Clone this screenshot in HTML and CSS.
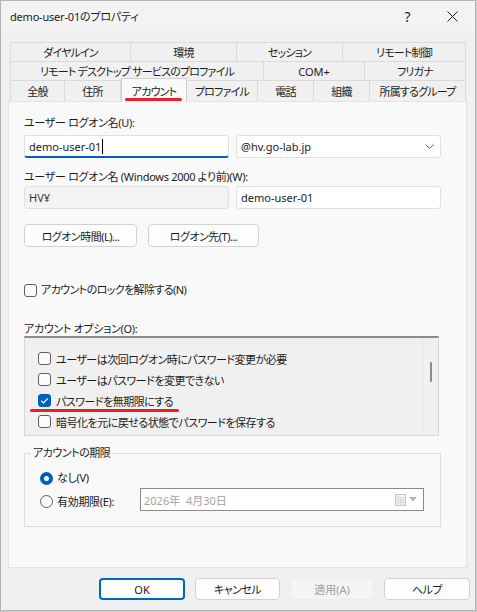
FILE: index.html
```html
<!DOCTYPE html>
<html lang="ja">

<head>
  <meta charset="UTF-8">
  <meta name="viewport" content="width=device-width, initial-scale=1.0">
  <title>demo-user-01のプロパティ</title>
  <link rel="stylesheet" href="styles.css">
</head>

<body>
  <div class="dialog">
    <div class="titlebar">
      <span class="title">demo-user-01のプロパティ</span>
      <span class="caption-btn">?</span>
      <span class="caption-btn">
        <svg width="11" height="11" viewBox="0 0 11 11"><path d="M0.5 0.5l10 10M10.5 0.5l-10 10" stroke="#1b1b1b" stroke-width="1"/></svg>
      </span>
    </div>

    <!-- three rows of tabs, the active one sits on the bottom row -->
    <div class="tabs">
      <div class="tab-row">
        <div class="tab w121">ダイヤルイン</div>
        <div class="tab w106">環境</div>
        <div class="tab w106">セッション</div>
        <div class="tab w123">リモート制御</div>
      </div>
      <div class="tab-row">
        <div class="tab w254">リモート デスクトップ サービスのプロファイル</div>
        <div class="tab w101 latin">COM+</div>
        <div class="tab w101">フリガナ</div>
      </div>
      <div class="tab-row last">
        <div class="tab w55">全般</div>
        <div class="tab w56">住所</div>
        <div class="tab w66 active">アカウント</div>
        <div class="tab w71">プロファイル</div>
        <div class="tab w56">電話</div>
        <div class="tab w56">組織</div>
        <div class="tab w96">所属するグループ</div>
      </div>
    </div>

    <div class="panel">
      <div class="field-label first">ユーザー ログオン名(U):</div>
      <div class="field-row">
        <div class="textbox focused">demo-user-01<span class="caret"></span></div>
        <div class="textbox combo">
          <span>@hv.go-lab.jp</span>
          <svg width="9" height="5" viewBox="0 0 9 5"><path d="M0.5 0.5l4 4 4-4" fill="none" stroke="#606060" stroke-width="1"/></svg>
        </div>
      </div>

      <div class="field-label second">ユーザー ログオン名 (Windows 2000 より前)(W):</div>
      <div class="field-row tight">
        <div class="textbox readonly">HV¥</div>
        <div class="textbox">demo-user-01</div>
      </div>

      <div class="button-row">
        <button class="btn jp logon-hours">ログオン時間(L)...</button>
        <button class="btn jp logon-to">ログオン先(T)...</button>
      </div>

      <label class="check unlock"><span class="box"></span>アカウントのロックを解除する(N)</label>

      <div class="field-label options">アカウント オプション(O):</div>
      <div class="listbox">
        <div class="list-items">
          <div class="list-item"><span class="box"></span>ユーザーは次回ログオン時にパスワード変更が必要</div>
          <div class="list-item"><span class="box"></span>ユーザーはパスワードを変更できない</div>
          <div class="list-item marked">
            <span class="box checked">
              <svg width="13" height="13" viewBox="0 0 13 13"><path d="M3.3 6.8l2.2 2.1 4.3-4.6" fill="none" stroke="#fff" stroke-width="1.2"/></svg>
            </span>パスワードを無期限にする
          </div>
          <div class="list-item"><span class="box"></span>暗号化を元に戻せる状態でパスワードを保存する</div>
        </div>
        <div class="scrollbar"><span class="thumb"></span></div>
      </div>

      <div class="groupbox">
        <span class="group-title">アカウントの期限</span>
        <label class="radio-row first"><span class="radio on"></span>なし(V)</label>
        <div class="expire-row">
          <label class="radio-row expire"><span class="radio"></span>有効期限(E):</label>
          <div class="datepicker">
            <span>2026年&nbsp;&nbsp;4月30日</span>
            <span class="date-icons">
              <svg width="11" height="12" viewBox="0 0 11 12">
                <rect x="0.5" y="0.5" width="10" height="11" fill="#f4f4f4" stroke="#c4c4c4"/>
                <path d="M0.5 3.5h10M0.5 6h10M0.5 8.5h10M3 3.5v8M5.5 3.5v8M8 3.5v8" stroke="#d6d6d6" stroke-width="0.8"/>
              </svg>
              <svg width="8" height="5" viewBox="0 0 8 5"><path d="M0 0h8L4 4.5z" fill="#b4b4b4"/></svg>
            </span>
          </div>
        </div>
      </div>
    </div>

    <div class="footer">
      <button class="btn default w86">OK</button>
      <button class="btn jp w85">キャンセル</button>
      <button class="btn disabled w84">適用(A)</button>
      <button class="btn jp w86">ヘルプ</button>
    </div>
  </div>
</body>

</html>
```

FILE: styles.css
```css
* {
  box-sizing: border-box;
}
body {
  margin: 0;
  background-color: #cdcdcd;
  font-family: "Noto Sans", "Noto Sans CJK JP", sans-serif;
  font-size: 11px;
  color: #1b1b1b;
  font-feature-settings: "palt";
}
.dialog {
  width: 476px;
  height: 611px;
  background-color: #f0f0f0;
  border: 1px solid #b4b4b4;
  display: flex;
  flex-direction: column;
}
.titlebar {
  height: 30px;
  display: flex;
  align-items: center;
  padding-left: 9px;
  background-color: #f3f3f3;
  letter-spacing: -0.2px;
}
.title {
  flex: 1;
}
.caption-btn {
  width: 45px;
  height: 30px;
  display: flex;
  align-items: center;
  justify-content: center;
  font-size: 14px;
}

/* tabs */
.tabs {
  margin: 11px 0 0 9px;
  width: 456px;
}
.tab-row {
  display: flex;
  height: 19px;
}
.tab-row.last {
  height: 21px;
}
.tab {
  display: flex;
  align-items: center;
  justify-content: center;
  border-top: 1px solid #dadada;
  border-right: 1px solid #dadada;
  background-color: #f0f0f0;
  white-space: nowrap;
  letter-spacing: -0.8px;
}
.tab.latin {
  letter-spacing: 0;
}
.tab:first-child {
  border-left: 1px solid #dadada;
}
.tab.active {
  position: relative;
  z-index: 1;
  margin-top: -2px;
  height: 24px;
  background-color: #f9f9f9;
  border-left: 1px solid #d0d0d0;
  border-right: 1px solid #d0d0d0;
  border-top: 1px solid #d0d0d0;
}
.tab.active::after {
  content: "";
  position: absolute;
  left: 3px;
  width: 57px;
  bottom: 1px;
  height: 3px;
  border-radius: 2px;
  background-color: #e8202a;
}
.w55 { width: 55px; }
.w56 { width: 56px; }
.w66 { width: 66px; }
.w71 { width: 71px; }
.w84 { width: 84px; }
.w85 { width: 85px; }
.w86 { width: 86px; }
.w96 { width: 96px; }
.w101 { width: 101px; }
.w106 { width: 106px; }
.w121 { width: 121px; }
.w123 { width: 123px; }
.w254 { width: 254px; }

/* tab page */
.panel {
  margin-left: 7px;
  width: 459px;
  height: 467px;
  background-color: #f9f9f9;
  border: 1px solid #e3e3e3;
  padding: 0 0 0 15px;
  display: flex;
  flex-direction: column;
  align-items: flex-start;
}
.field-label {
  line-height: 16px;
  letter-spacing: -0.3px;
}
.field-label.first {
  margin-top: 13px;
}
.field-label.second {
  margin-top: 11px;
}
.field-label.options {
  margin-top: 24px;
  line-height: 14px;
}
.field-row {
  display: flex;
  gap: 7px;
  margin-top: 4px;
}
.field-row.tight {
  margin-top: 1px;
}
.textbox {
  width: 205px;
  height: 23px;
  display: flex;
  align-items: center;
  padding: 0 4px;
  background-color: #fff;
  border: 1px solid #e0e0e0;
  border-radius: 3px;
  white-space: nowrap;
}
.textbox.focused {
  border-bottom: 2px solid #005fb8;
  padding-top: 1px;
}
.caret {
  display: inline-block;
  width: 1px;
  height: 15px;
  margin-left: 1px;
  background-color: #000;
}
.textbox.combo {
  justify-content: space-between;
  padding-right: 6px;
}
.textbox.readonly {
  background-color: #f3f3f3;
  color: #333;
}
.button-row {
  display: flex;
  gap: 11px;
  margin-top: 15px;
}
.btn {
  height: 23px;
  padding: 0;
  font-family: inherit;
  font-size: 11px;
  font-feature-settings: "palt";
  color: #1b1b1b;
  background-color: #fdfdfd;
  border: 1px solid #d2d2d2;
  border-radius: 4px;
}
.btn.jp {
  letter-spacing: -0.5px;
}
.logon-hours {
  width: 113px;
}
.logon-to {
  width: 111px;
}

/* checkboxes */
.check {
  display: flex;
  align-items: center;
  gap: 4px;
  line-height: 16px;
  letter-spacing: -0.6px;
}
.check.unlock {
  margin-top: 35px;
}
.box {
  width: 13px;
  height: 13px;
  flex-shrink: 0;
  border: 1px solid #5f5f5f;
  border-radius: 3px;
  background-color: #fbfbfb;
}
.box.checked {
  border-color: #005fb8;
  background-color: #005fb8;
  display: flex;
}
.box.checked svg {
  margin: -1px;
}
.listbox {
  width: 415px;
  height: 100px;
  display: flex;
  background-color: #f0f0f0;
  border: 1px solid #d6d6d6;
  border-top: 2px solid #8c8c8c;
  overflow: hidden;
}
.list-items {
  flex: 1;
  padding-top: 10px;
}
.list-item {
  position: relative;
  height: 21px;
  display: flex;
  align-items: center;
  gap: 5px;
  padding-left: 13px;
  white-space: nowrap;
  letter-spacing: -0.5px;
}
.list-item.marked::after {
  content: "";
  position: absolute;
  left: 5px;
  width: 149px;
  top: 19px;
  height: 3px;
  border-radius: 2px;
  background-color: #e8202a;
}
.scrollbar {
  width: 16px;
  border-left: 1px solid #e2e2e2;
  display: flex;
  justify-content: center;
  padding-top: 24px;
}
.thumb {
  width: 2px;
  height: 20px;
  border-radius: 1px;
  background-color: #8a8a8a;
}

/* expiry group */
.groupbox {
  margin-top: 17px;
  width: 417px;
  height: 74px;
  border: 1px solid #dcdcdc;
  padding-left: 15px;
  display: flex;
  flex-direction: column;
  align-items: flex-start;
}
.group-title {
  margin: -8px 0 0 -9px;
  padding: 0 2px;
  line-height: 14px;
  letter-spacing: -0.5px;
  background-color: #f9f9f9;
}
.radio-row {
  display: flex;
  align-items: center;
  gap: 4px;
  line-height: 16px;
  letter-spacing: -0.3px;
}
.radio-row.first {
  margin-top: 10px;
}
.radio-row.expire {
  width: 100px;
  padding-top: 4px;
}
.radio {
  width: 13px;
  height: 13px;
  border: 1px solid #5f5f5f;
  border-radius: 50%;
  background-color: #fbfbfb;
}
.radio.on {
  border: 4px solid #005fb8;
  background-color: #fff;
}
.expire-row {
  display: flex;
  align-items: center;
  margin-top: 2px;
}
.datepicker {
  width: 284px;
  height: 23px;
  display: flex;
  align-items: center;
  justify-content: space-between;
  padding: 0 6px 0 3px;
  background-color: #fff;
  border: 1px solid #8a8a8a;
  color: #a3a3a3;
}
.date-icons {
  display: flex;
  align-items: center;
  gap: 3px;
}

/* dialog buttons */
.footer {
  display: flex;
  justify-content: flex-end;
  gap: 10px;
  margin-top: 10px;
  padding-right: 5px;
}
.footer .btn {
  height: 22px;
}
.btn.default {
  border: 2px solid #0067c0;
}
.btn.disabled {
  color: #a0a0a0;
  background-color: #f5f5f5;
  border-color: #ececec;
}
```
